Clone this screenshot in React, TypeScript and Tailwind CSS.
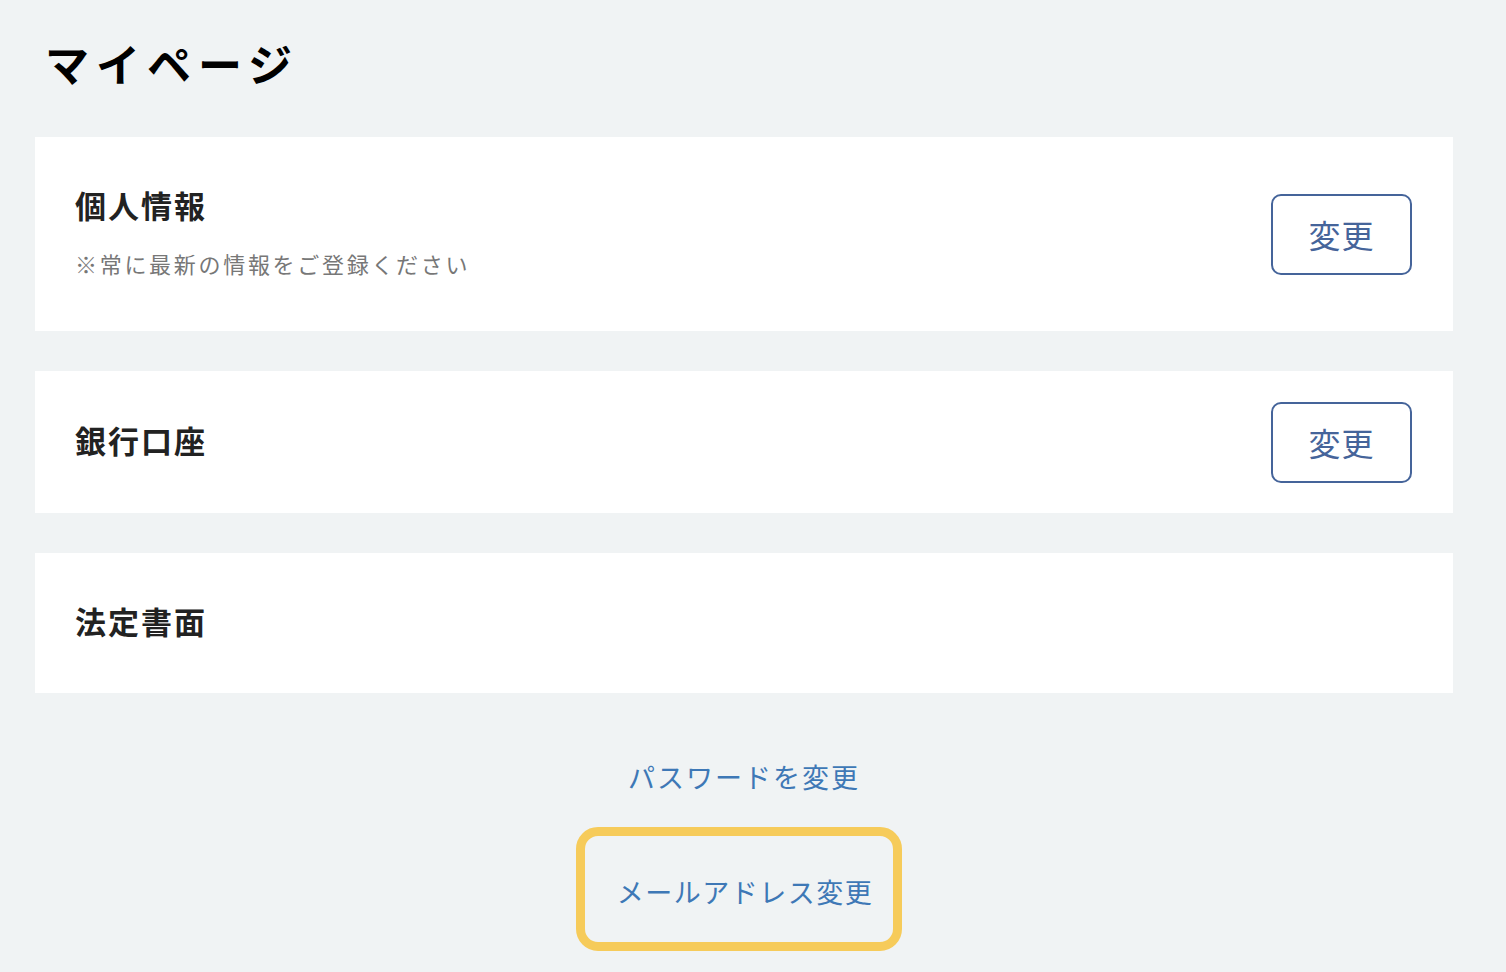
import { ReactNode } from "react";

const font = { fontFamily: '"Noto Sans CJK JP", "Noto Sans", sans-serif' };

const ChangeButton = () => (
  <button className="w-[141px] h-[81px] rounded-[10px] border-2 border-[#45649a] text-[32px] text-[#45649a] leading-none tracking-[1px] bg-white">
    変更
  </button>
);

const Section = ({ title, note, action, height }: { title: string; note?: string; action?: ReactNode; height: string }) => (
  <div className={`bg-white flex items-center justify-between pl-[40px] pr-[41px] ${height}`}>
    <div className="pb-[6px]">
      <h2 className="text-[31px] font-bold text-[#222] leading-none tracking-[2px]">{title}</h2>
      {note && (
        <p className="mt-[32px] text-[22px] text-[#777] leading-none tracking-[2.7px]">{note}</p>
      )}
    </div>
    {action}
  </div>
);

export default function App() {
  return (
    <div className="min-h-[972px] bg-[#f0f3f4] px-[35px] pt-[41px] pb-[20px]" style={font}>
      <h1 className="ml-[10px] text-[44px] font-bold text-black leading-none tracking-[7px]">マイページ</h1>

      <div className="mt-[52px] flex flex-col gap-[40px] w-[1418px]">
        <Section
          title="個人情報"
          note="※常に最新の情報をご登録ください"
          action={<ChangeButton />}
          height="h-[194px]"
        />
        <Section title="銀行口座" action={<ChangeButton />} height="h-[142px]" />
        <Section title="法定書面" height="h-[140px]" />
      </div>

      <div className="w-[1418px] flex flex-col items-center">
        <a className="mt-[70px] text-[27px] text-[#3e78b6] leading-none tracking-[2px] cursor-pointer">
          パスワードを変更
        </a>
        <div className="mt-[37px] -ml-[10px] w-[326px] h-[124px] rounded-[22px] border-[9px] border-[#f6cb5a] flex items-center justify-center">
          <a className="ml-[12px] mt-[4px] text-[27px] text-[#3e78b6] leading-none tracking-[1.5px] cursor-pointer">
            メールアドレス変更
          </a>
        </div>
      </div>
    </div>
  );
}
